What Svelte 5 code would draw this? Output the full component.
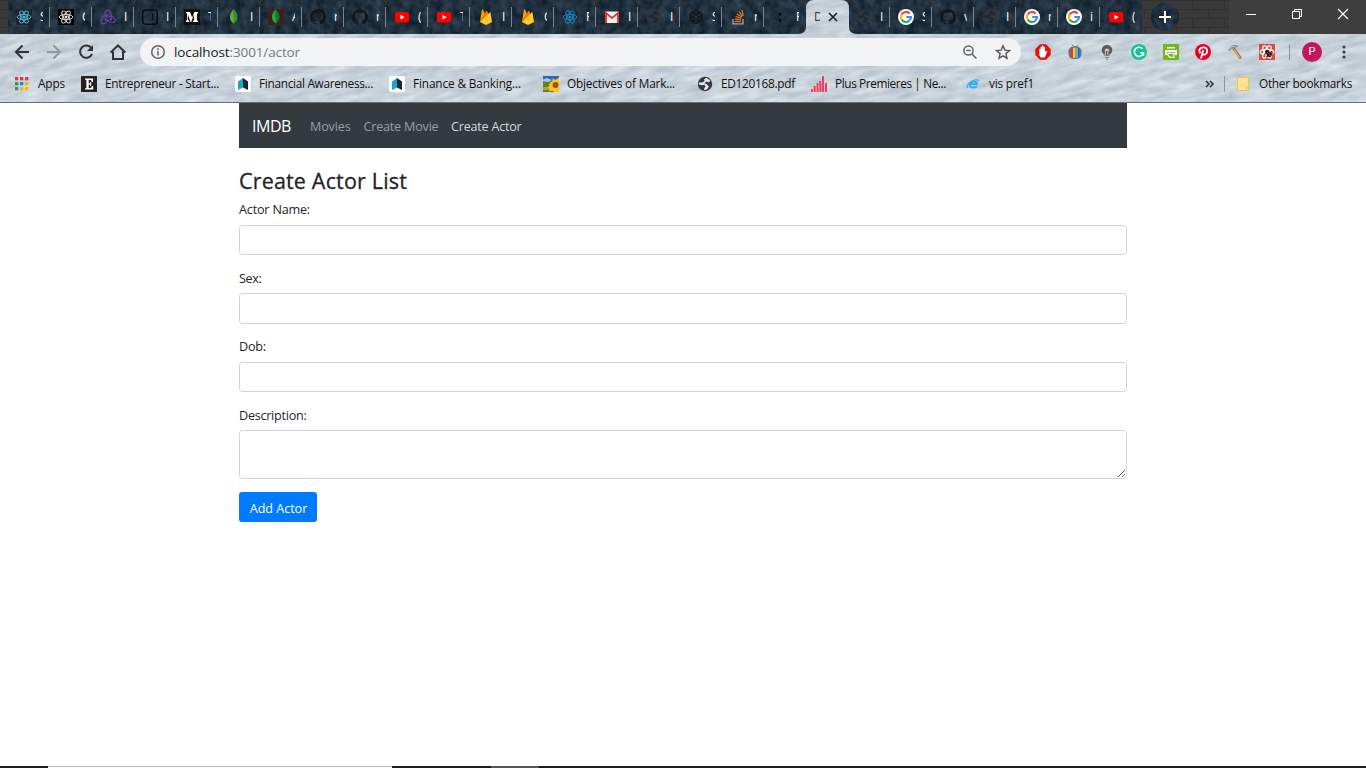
<script>
  const tabs = [
    ['react', 'S'], ['reactbox', 'C'], ['redux', 'I'], ['square', 'I'], ['medium', 'T'], ['leaf', 'I'], ['leafbox', 'A'],
    ['github', 'r'], ['github', 'r'], ['youtube', '('], ['youtube', 'T'], ['fire', 'I'], ['fire', 'C'], ['reactblue', 'F'],
    ['gmail', 'I'], ['darkglobe', 'I'], ['cube', 'S'], ['stack', 'r'], ['dots', 'F'], ['active', 'D'],
    ['darkglobe', 'I'], ['google', 'S'], ['github', 'v'], ['darkglobe', 'I'], ['google', 'r'], ['google', 'i'], ['youtube', '(']
  ];
  const bookmarks = [
    { icon: 'apps', text: 'Apps', w: 27, gap: 14 },
    { icon: 'ent', text: 'Entrepreneur - Start...', w: 114, gap: 16 },
    { icon: 'book', text: 'Financial Awareness...', w: 114, gap: 16 },
    { icon: 'book', text: 'Finance & Banking...', w: 108, gap: 16 },
    { icon: 'flower', text: 'Objectives of Mark...', w: 108, gap: 22 },
    { icon: 'globe', text: 'ED120168.pdf', w: 74, gap: 22 },
    { icon: 'bars', text: 'Plus Premieres | Ne...', w: 111, gap: 16 },
    { icon: 'ie', text: 'vis pref1', w: 45, gap: 19 }
  ];
  const extensions = ['hand', 'tv', 'bulb', 'gram', 'print', 'pin', 'hammer', 'bug'];
  const fields = ['Actor Name:', 'Sex:', 'Dob:'];

  // Spreads the letters so that the label takes up the given width.
  function fit(node, width) {
    const natural = node.getBoundingClientRect().width;
    node.style.letterSpacing = (width - natural) / node.textContent.length + 'px';
  }
</script>

{#snippet atom(color, sw)}
  <g fill="none" stroke={color} stroke-width={sw}>
    <ellipse cx="8" cy="8" rx="6.8" ry="2.6" />
    <ellipse cx="8" cy="8" rx="6.8" ry="2.6" transform="rotate(60 8 8)" />
    <ellipse cx="8" cy="8" rx="6.8" ry="2.6" transform="rotate(120 8 8)" />
  </g>
  <circle cx="8" cy="8" r="1.5" fill={color} />
{/snippet}

{#snippet world(color, land)}
  <circle cx="8" cy="8" r="7.2" fill={color} />
  <path d="M9.2 1.7 7 3.5 7.6 5 5.2 6.6H2.2L1.6 8.6 5 9.2 7.4 8.8 8.6 10.6 7 12.4 7.4 14.2 10.2 13.2 12 10.6 10.2 8.4 7.4 7.2 9.6 5.6 12 6.4 13.4 4.6Z" fill={land} />
{/snippet}

{#snippet icon(name)}
  <svg class="ic" viewBox="0 0 16 16" width="16" height="16">
    {#if name === 'react'}
      <rect width="16" height="16" rx="1" fill="#20232a" />{@render atom('#50bcd8', 0.9)}
    {:else if name === 'reactbox'}
      <rect width="16" height="16" fill="#000" />{@render atom('#e8e8e8', 0.9)}
    {:else if name === 'reactblue'}
      {@render atom('#1489c4', 1)}
    {:else if name === 'redux'}
      <g fill="none" stroke="#643fa5" stroke-width="1.3" stroke-linecap="round">
        <path d="M10.9 10.3C12 6 10.8 1.4 8 1.2 5.200 1 4.100 4.200 6.100 6.700" />
        <path d="M5.600 6.200C2.200 7.400-.2 11.800 1.500 13.800c1.800 2 5.400.4 6.700-2.500" />
        <path d="M6 10.800c3 3 8 3.700 9 1.300 1-2.500-2-5.200-5.700-4.700" />
      </g>
      <circle cx="6.600" cy="6.900" r="1.100" fill="#764abc" /><circle cx="10.700" cy="10.600" r="1.100" fill="#764abc" /><circle cx="5.800" cy="10.700" r="1.100" fill="#764abc" />
    {:else if name === 'square'}
      <rect x=".7" y="1" width="14.600" height="14.200" rx="3" fill="none" stroke="#060b0f" stroke-width="1.400" /><path d="M10.500 5v6" stroke="#060b0f" stroke-width="1.200" />
    {:else if name === 'medium'}
      <rect width="16" height="16" fill="#12100e" /><path d="M2 3h4l2.200 5.400L10.400 3H14v1l-1.100.7v6.600L14 12v1H8.900v-1l1.200-.7V5.500L7.200 13h-.6L3.900 5.700v5.100L5.300 12v1H2v-1l1.100-1.200V4.700L2 3.800Z" fill="#fff" />
    {:else if name === 'leaf' || name === 'leafbox'}
      {#if name === 'leafbox'}<rect width="16" height="16" fill="#3b2317" />{/if}
      <path d="M7.600 0C5 3 4 5.500 4 8c0 3 1.500 5 3.600 6.200L8 16Z" fill={name === 'leaf' ? '#63ad3c' : '#28aa43'} />
      <path d="M7.600 0C10.200 3 11.500 5.500 11.500 8c0 3-1.500 5-3.500 6.400V16Z" fill={name === 'leaf' ? '#3f8f39' : '#16763b'} />
    {:else if name === 'github'}
      <path fill="#14171a" d="M8 0C3.580 0 0 3.580 0 8c0 3.540 2.290 6.530 5.470 7.590.4.070.55-.17.55-.38V13.800c-2.230.49-2.700-1.070-2.700-1.070-.36-.92-.89-1.170-.89-1.170-.73-.5.060-.49.060-.49.8.060 1.230.82 1.230.82.72 1.210 1.870.87 2.330.66.070-.52.280-.87.500-1.070-1.770-.2-3.640-.89-3.640-3.950 0-.87.310-1.590.82-2.150-.08-.2-.36-1.020.080-2.120 0 0 .67-.21 2.200.82a7.700 7.700 0 0 1 4 0c1.530-1.040 2.200-.82 2.200-.82.440 1.100.160 1.920.080 2.120.510.560.820 1.270.820 2.150 0 3.070-1.870 3.750-3.650 3.950.290.250.540.730.540 1.480v2.200c0 .210.150.460.550.380A8 8 0 0 0 16 8c0-4.420-3.580-8-8-8Z" />
    {:else if name === 'youtube'}
      <rect x="1" y="3" width="14" height="10.500" rx="2.200" fill="#f00" /><path d="M6.500 5.800v4.800L10.600 8.200Z" fill="#fff" />
    {:else if name === 'fire'}
      <path d="M2 13 4 .8c.1-.6.600-.6.900-.1L7 4.500Z" fill="#ffa000" /><path d="M2 13 8.200 2.300c.3-.5.700-.5 1 0L14 13Z" fill="#f57c00" /><path d="m2 13 9.600-9.500c.4-.4.900-.2 1 .4L14 13l-5.300 2.800c-.5.200-.9.200-1.300 0Z" fill="#ffca28" />
    {:else if name === 'gmail'}
      <rect x="1" y="2.500" width="14" height="11.500" rx="1" fill="#eee" /><path d="M2 14V4l6 5 6-5v10" fill="none" stroke="#d93d34" stroke-width="2" /><path d="m3 3 5 4 5-4" stroke="#fff" fill="none" />
    {:else if name === 'darkglobe'}
      {@render world('#30353a', '#1a2935')}
    {:else if name === 'globe'}
      {@render world('#34383c', '#dfe5ea')}
    {:else if name === 'cube'}
      <path d="m8 .5 6.600 3.700v7.600L8 15.500l-6.600-3.700V4.200Z" fill="#10161b" /><path d="m3 5 5 2.800L13 5M8 8v5.500M8 2v2.500M3.200 10.500l2.400-1.300m7.200 1.300-2.400-1.300" stroke="#2d3f4b" fill="none" />
    {:else if name === 'stack'}
      <path d="M3 10v4.800h10V10" fill="none" stroke="#9ba4aa" stroke-width="1.300" /><path d="M5 12.500h6M5 10.200l6 .6M5.500 7.600l5.800 1.600M6.800 5l5.200 3M9 2.500l3.600 4.800M12 .8l1.200 5.800" stroke="#e87922" stroke-width="1.200" />
    {:else if name === 'dots'}
      <circle cx="8" cy="5" r="1.600" fill="#070c11" /><path d="M6.500 10h3v2L8 14.500Z" fill="#070c11" />
    {:else if name === 'google'}
      <circle cx="8" cy="8" r="8" fill="#fff" />
      <g fill="none" stroke-width="2.200"><path d="M11.600 4.500A5 5 0 0 0 3.700 5.400" stroke="#ea4335" /><path d="M3.700 5.400a5 5 0 0 0 0 5.200" stroke="#fbbc05" /><path d="M3.700 10.600a5 5 0 0 0 7.600 1.100" stroke="#34a853" /><path d="M11.300 11.700A5 5 0 0 0 13 8H8.300" stroke="#4285f4" /></g>
    {:else if name === 'apps'}
      {#each [['#e53935', '#e53935', '#e53935'], ['#2e9e52', '#1e88e5', '#fbb300'], ['#2e9e52', '#fbb300', '#fbb300']] as row, r}
        {#each row as c, k}<rect x={1 + k * 5} y={1 + r * 5} width="3.300" height="3.300" fill={c} />{/each}
      {/each}
    {:else if name === 'ent'}
      <rect width="16" height="16" fill="#222" /><path d="M4 2.500h8V6h-1.300L10 4H7.700v3.200h1.500V6h1v4h-1V8.500H7.700V12H10l1-2h1.200v3.500H4v-1.200h1.400V3.800H4Z" fill="#fff" />
    {:else if name === 'book'}
      <rect width="16" height="16" rx="2" fill="#fff" /><path d="M3 5.500 8 2v9.500L3 14Z" fill="#18a7bf" /><path d="m8 2 5 3.500V14l-5-2.500Z" fill="#17263a" />
    {:else if name === 'flower'}
      <rect width="16" height="16" fill="#2868b7" /><path d="M0 7 5 5l3 3v8H0Z" fill="#6c7d26" /><path d="M0 3.500 4 2l5 2-3 2-6-.5Z" fill="#a9c3dc" /><path d="m7 6 2-.5L10 2l2 2 4-2.500V16h-4l-3-1-3 .5.500-2.500-3-1 3-2-1-2.500 2 .5Z" fill="#fcc415" /><circle cx="12.500" cy="9" r="3" fill="#9b5510" /><path d="M0 11h4l2 3H0Z" fill="#b9a326" />
    {:else if name === 'bars'}
      <path d="M1 16v-3M3.700 16v-6M6.500 16V7M9.300 16V5M12 16V0M15 16V7" stroke="#f83358" stroke-width="1.900" />
    {:else if name === 'ie'}
      <g fill="none" stroke="#30aeea"><path d="M12 10.200Q10 12 7 11.500 4.500 11 5 8.500 5.800 5.500 9 5.500q3.300 0 2.800 2.700H5.500" stroke-width="2" /><path d="M3.500 11.500Q1 12 2.500 9.300 5 5 10 4q4-.5 3.500 1.500" stroke-width="1.200" /></g>
    {:else if name === 'hand'}
      <path d="M5 .3h6L15.700 5v6L11 15.700H5L.3 11V5Z" fill="#e60f0f" /><path d="M4.300 8V5q.7-.7 1.300 0V3q.7-.8 1.400 0V2q.8-.8 1.500 0v1q.8-.7 1.400 0v5l1.400-1.300q.9-.2.900.5L10.500 12l-1 1.500h-4L4.300 11Z" fill="#fff" />
    {:else if name === 'tv'}
      <path d="m4.500.3 3.500 3 3-2" stroke="#777" fill="none" /><rect x="1.500" y="2.500" width="13" height="12.500" rx="5" fill="#68747c" /><path d="M3.500 4.500H6v8.500H3.500Z" fill="#e63b2e" /><path d="M6 3.800h2.500v10H6Z" fill="#fcc52d" /><path d="M8.500 3.800H11v10H8.500Z" fill="#53b5d9" /><path d="M11 4.500h1.500v8.500H11Z" fill="#236ab0" />
    {:else if name === 'bulb'}
      <circle cx="8" cy="6" r="5.300" fill="#5c5c5c" /><path d="M6 8Q5 4.500 8 4.500T10 8v6H6Z" fill="#c4c7c9" /><path d="M7.500 7v4m1.500-4v4" stroke="#5c5c5c" /><path d="M5.500 11.500h5M6 13.500h4M7 15.200h2" stroke="#858585" />
    {:else if name === 'gram'}
      <circle cx="8" cy="8" r="8" fill="#15c39a" /><path d="M11.500 4.800a4.600 4.600 0 1 0 1 3.900H9.200M12.500 8.700v3" fill="none" stroke="#fff" stroke-width="1.500" />
    {:else if name === 'print'}
      <rect width="16" height="16" rx="1" fill="#75b61b" /><path d="M4 3h8v1.500H4ZM2 6h12v5h-2V8H4v3H2Z" fill="#fff" /><path d="M5 9.300h6v4H7l-2-2Z" fill="none" stroke="#fff" stroke-width="1.200" />
    {:else if name === 'pin'}
      <circle cx="8" cy="8" r="8" fill="#e60023" /><path d="M5.300 9.300C2.800 5 6 3.300 8.400 3.300c5.400 0 4.300 7.400.8 7.400-1.400 0-1.800-1-1.800-1M8.200 6 6 14.500" fill="none" stroke="#fff" stroke-width="1.800" />
    {:else if name === 'hammer'}
      <path d="m7 5 6 8.500" stroke="#b8732f" stroke-width="3" stroke-linecap="round" /><path d="m7 5.500 5.500 8" stroke="#f2bd80" stroke-width="1.200" /><path d="M1 5.500 4.500 2Q8 0 12 2.500L9 3 7.500 5.500 5.500 4 2.500 7Z" fill="#7f8a91" /><path d="m2 5.300 3.200-2.500L8 2.300" stroke="#cdd5da" fill="none" stroke-width=".8" />
    {:else if name === 'bug'}
      <rect width="16" height="16" fill="#dd4b39" />{@render atom('#fff', 1.2)}<circle cx="8.300" cy="8" r="2.200" fill="#271c1b" /><circle cx="10.300" cy="10.500" r="2.600" fill="#271c1b" /><path d="m5 10.500 8-3M7 13l7-3.500" stroke="#271c1b" stroke-width=".8" /><path d="m8 8 4 4" stroke="#dd4b39" stroke-width=".8" />
    {/if}
  </svg>
{/snippet}

<div class="window">
  <header class="chrome">
    <svg class="texture" width="1366" height="103" viewBox="0 0 1366 103">
      <defs>
        <filter id="ice" x="0" y="0" width="100%" height="100%" color-interpolation-filters="sRGB">
          <feTurbulence type="fractalNoise" baseFrequency=".04 .16" numOctaves="5" seed="8" />
          <feColorMatrix values=".24 0 0 0 .665  .22 0 0 0 .715  .19 0 0 0 .765  0 0 0 0 1" />
        </filter>
        <filter id="night" x="0" y="0" width="100%" height="100%" color-interpolation-filters="sRGB">
          <feTurbulence type="fractalNoise" baseFrequency=".12 .1" numOctaves="4" seed="3" />
          <feColorMatrix values=".2 0 0 0 .03  .23 0 0 0 .075  .25 0 0 0 .12  0 0 0 0 1" />
        </filter>
        <pattern id="brick" width="32" height="18" patternUnits="userSpaceOnUse">
          <rect width="32" height="18" fill="#393939" /><path d="M0 .5h32M0 9.500h32M8.500 0v9M24.500 9v9" stroke="#303030" />
        </pattern>
        <clipPath id="tabshape">
          {#each tabs as _, i}
            <path d="M{8 + i * 42} 34V6q0-6 5-6h32q5 0 5 6v28Z" />
          {/each}
          <circle cx="1165" cy="17" r="14" />
        </clipPath>
        <clipPath id="lightshape">
          <path d="M0 34H798Q806 34 806 27V8Q806 0 814 0H841Q849 0 849 8V27Q849 34 857 34H1366V103H0Z" />
        </clipPath>
      </defs>
      <rect width="1366" height="34" fill="url(#brick)" />
      <rect x="1229" width="137" height="34" fill="#3e3e3e" />
      <g clip-path="url(#tabshape)"><rect width="1366" height="34" filter="url(#night)" /></g>
      <g clip-path="url(#lightshape)"><g transform="rotate(-12 683 51)"><rect x="-20" y="-150" width="1410" height="400" filter="url(#ice)" /></g></g>
      <path d="M0 102.500h1366" stroke="#65707a" />
    </svg>

    <div class="tabs">
      {#each tabs as [name, letter], i}
        <div class="tab" class:active={name === 'active'} class:line={i !== 18 && i !== 19 && i !== 26}>
          {#if name === 'active'}
            <span class="letter">{letter}</span>
            <svg width="10" height="10" viewBox="0 0 10 10"><path d="m1 1 8 8m0-8-8 8" stroke="#222" stroke-width="1.700" /></svg>
          {:else}
            {@render icon(name)}<span class="letter">{letter}</span>
          {/if}
        </div>
      {/each}
      <svg class="plus" width="12" height="12" viewBox="0 0 12 12"><path d="M6 0v12M0 6h12" stroke="#fff" stroke-width="2" /></svg>
      <div class="controls">
        <svg width="12" height="12" viewBox="0 0 12 12"><path d="M1 6.500h10" stroke="#fff" /></svg>
        <svg width="12" height="12" viewBox="0 0 12 12"><path d="M1.500 3.500h7v7h-7ZM3.500 3V1.500h7v7H9" stroke="#fff" fill="none" /></svg>
        <svg width="12" height="12" viewBox="0 0 12 12"><path d="m1 1 10 10m0-10L1 11" stroke="#fff" stroke-width="1.100" /></svg>
      </div>
    </div>

    <div class="toolbar">
      <div class="navicons">
        <svg width="16" height="16" viewBox="0 0 16 16"><path d="M15 8H2M8.500 1.500 2 8l6.500 6.500" fill="none" stroke="#2f3336" stroke-width="2" /></svg>
        <svg width="16" height="16" viewBox="0 0 16 16"><path d="M1 8h13M7.500 1.500 14 8l-6.500 6.500" fill="none" stroke="#91989d" stroke-width="2" /></svg>
        <svg width="16" height="16" viewBox="0 0 16 16"><path d="M13.500 4.300A6.200 6.200 0 1 0 14 10" fill="none" stroke="#2f3336" stroke-width="2" /><path d="M15 1v6H9Z" fill="#2f3336" /></svg>
        <svg width="16" height="16" viewBox="0 0 16 16"><path d="M.6 8.500 8 1.500l7.400 7M3 7.500V15h10V7.500" fill="none" stroke="#2f3336" stroke-width="2" /></svg>
      </div>
      <div class="address">
        <svg width="16" height="16" viewBox="0 0 16 16"><circle cx="8" cy="8" r="6.300" fill="none" stroke="#5f6368" stroke-width="1.500" /><path d="M8 7v4.500M8 4.300v1.600" stroke="#5f6368" stroke-width="1.500" /></svg>
        <span class="url"><span use:fit={126}>localhost<i>:3001/actor</i></span></span>
        <svg width="16" height="16" viewBox="0 0 16 16"><circle cx="6.500" cy="6.500" r="4.600" fill="none" stroke="#5f6368" stroke-width="1.500" /><path d="m10 10 4.500 4.500M4.300 6.500h4.400" stroke="#5f6368" stroke-width="1.500" /></svg>
        <svg width="16" height="16" viewBox="0 0 16 16"><path d="m8 1.800 1.800 4.300 4.700.4-3.600 3.100 1.100 4.600L8 11.800l-4 2.400 1.100-4.600L1.500 6.500l4.700-.4Z" fill="none" stroke="#54585c" stroke-width="1.400" /></svg>
      </div>
      <div class="extensions">{#each extensions as e}{@render icon(e)}{/each}</div>
      <span class="sep"></span>
      <span class="avatar">P</span>
      <svg class="menu" width="4" height="14" viewBox="0 0 4 14"><g fill="#3b3f43"><circle cx="2" cy="2" r="1.600" /><circle cx="2" cy="7" r="1.600" /><circle cx="2" cy="12" r="1.600" /></g></svg>
    </div>

    <div class="bookmarks">
      {#each bookmarks as b}
        <div class="bookmark" style="margin-left:{b.gap}px">
          {@render icon(b.icon)}
          <span class="label" style="width:{b.w}px"><span use:fit={b.w}>{b.text}</span></span>
        </div>
      {/each}
      <div class="other">
        <svg width="9" height="8" viewBox="0 0 9 8"><path d="m1 1 3 3-3 3m4-6 3 3-3 3" fill="none" stroke="#303438" stroke-width="1.600" /></svg>
        <span class="sep"></span>
        <svg width="12" height="14" viewBox="0 0 12 14"><path d="M.5.5h11v9.500h-2v3.500h-9Z" fill="#ffe392" stroke="#eac64f" /><path d="M9.500 10h2v3.500h-2Z" fill="#ffe392" stroke="#eac64f" /></svg>
        <span class="label last"><span use:fit={93}>Other bookmarks</span></span>
      </div>
    </div>
  </header>

  <main>
    <nav>
      <span class="brand"><span use:fit={39}>IMDB</span></span>
      <span class="link" style="width:41px"><span use:fit={40.5}>Movies</span></span>
      <span class="link" style="width:75px"><span use:fit={75}>Create Movie</span></span>
      <span class="link on"><span use:fit={70.5}>Create Actor</span></span>
    </nav>
    <h3><span use:fit={168}>Create Actor List</span></h3>
    <form>
      {#each fields as f, i}
        <label class="group"><span class="caption"><span use:fit={[71, 22.5, 27][i]}>{f}</span></span><input type="text" /></label>
      {/each}
      <label class="group area"><span class="caption"><span use:fit={67.5}>Description:</span></span><textarea></textarea></label>
      <button type="button"><span use:fit={57.5}>Add Actor</span></button>
    </form>
  </main>

  <footer><span class="task"></span><span class="glow"></span></footer>
</div>

<style>
  :global(body) { margin: 0; background: #fff; overflow: hidden; }
  .window { width: 1366px; height: 768px; display: flex; flex-direction: column; font-family: 'Open Sans', 'Noto Sans', sans-serif; }
  svg { flex: none; display: block; }
  .chrome { position: relative; height: 103px; flex: none; font-size: 11.800px; }
  .texture { position: absolute; inset: 0; z-index: 0; }
  .tabs, .toolbar, .bookmarks { position: relative; z-index: 1; display: flex; align-items: center; box-sizing: border-box; }
  .tabs { height: 34px; padding-left: 8px; }
  .tab { width: 42px; height: 34px; box-sizing: border-box; padding-left: 8px; display: flex; align-items: center; gap: 8px; background: linear-gradient(#78848c, #78848c) right center / 0 18px no-repeat; }
  .tab.line { background-size: 1px 20px; }
  .tab .letter { width: 3px; overflow: hidden; color: #fff; line-height: 18px; padding-bottom: 2px; }
  .tab.active { gap: 8px; }
  .tab.active .letter { width: 6px; color: #333; }
  .plus { margin-left: 17px; }
  .controls { display: flex; gap: 34px; margin: -6px 17px 0 auto; }
  .toolbar { height: 36px; }
  .navicons { display: flex; gap: 16px; padding-left: 14px; }
  .address { width: 881px; height: 28px; margin-left: 14px; padding: 0 10px; border-radius: 14px; box-sizing: border-box; background: #f1f3f4; display: flex; align-items: center; gap: 8px; }
  .url { flex: 1; font-size: 13.500px; color: #202124; white-space: nowrap; }
  .url i { font-style: normal; color: #777b7f; }
  .address svg:last-child { margin-left: 8px; }
  .address svg:nth-last-child(2) { margin-right: 1px; }
  .extensions { display: flex; gap: 16px; margin-left: 14px; }
  .sep { width: 1px; height: 16px; background: #8d979f; }
  .toolbar .sep { margin-left: 14px; }
  .avatar { width: 20px; height: 20px; margin-left: 12px; border-radius: 50%; background: #c2185b; color: #fff; text-align: center; font: 11px/20px Roboto, sans-serif; }
  .menu { margin-left: 20px; }
  .bookmarks { height: 28px; }
  .bookmark { display: flex; align-items: center; gap: 8px; }
  .label { white-space: nowrap; color: #111; line-height: 16px; padding-bottom: 2px; }
  .other { display: flex; align-items: center; margin-left: auto; padding-right: 14px; }
  .other .sep { margin: 0 12px 0 10px; }
  .last { width: 93px; margin-left: 10px; }
  main { width: 888px; margin: 0 auto; flex: 1; color: #212529; font-size: 12.600px; }
  nav { height: 45px; box-sizing: border-box; padding: 0 13px; background: #343a40; display: flex; align-items: center; color: #9a9da0; }
  .brand { width: 40px; margin-right: 18px; font-size: 16px; color: #fff; line-height: 20px; }
  .link { margin-right: 12.500px; white-space: nowrap; line-height: 18px; padding-top: 2px; }
  .link.on { color: #d6d8d9; }
  h3 { margin: 19px 0 7px; font-size: 21.500px; font-weight: 500; line-height: 27px; white-space: nowrap; -webkit-text-stroke: .3px #212529; }
  form { display: flex; flex-direction: column; align-items: flex-start; }
  .group { display: flex; flex-direction: column; width: 100%; height: 68.400px; }
  .caption { height: 24px; line-height: 18px; white-space: nowrap; box-sizing: border-box; }
  .group:nth-child(even) .caption { padding-top: .6px; }
  input, textarea { width: 100%; box-sizing: border-box; margin: 0; border: 1px solid #ced4da; border-radius: 3.500px; background: #fff; outline: 0; }
  input { height: 30.400px; }
  textarea { height: 49px; resize: vertical; display: block; }
  .group.area { height: 85.800px; }
  button { width: 78px; height: 30px; padding: 4px 0 0 1px; border: 0; border-radius: 3px; background: #007bff; color: #fff; font: 12.600px/18px 'Open Sans', sans-serif; white-space: nowrap; }
  footer { height: 2px; flex: none; display: flex; background: #1d1d1d; }
  .task { width: 344px; height: 1px; margin-left: 48px; background: #bbb; border-bottom: 1px solid #fff; }
  .glow { width: 48px; margin-left: 99px; background: #555; }
</style>
